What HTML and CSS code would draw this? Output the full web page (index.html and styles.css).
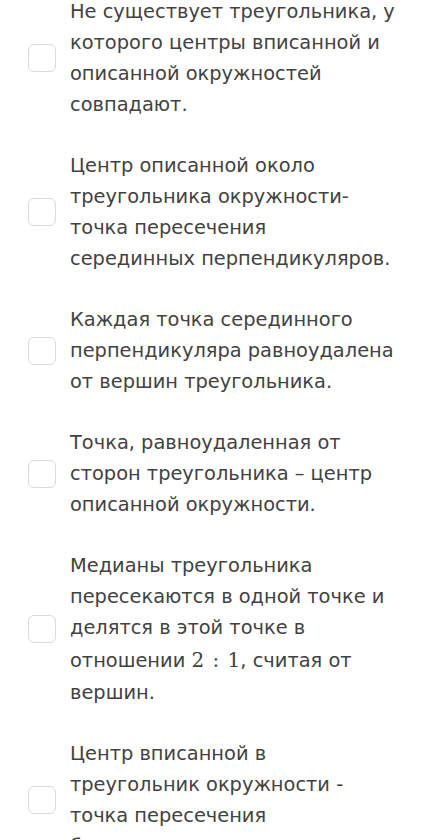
FILE: index.html
```html
<!DOCTYPE html>
<html lang="ru">
<head>
    <meta charset="UTF-8">
    <meta name="viewport" content="width=device-width, initial-scale=1.0">
    <title>Утверждения о треугольнике</title>
    <link rel="stylesheet" href="styles.css">
</head>
<body>
    <div class="lista">
        <label class="opcao">
            <span class="caixa"></span>
            <span class="texto">Не существует треугольника, у которого центры вписанной и описанной окружностей совпадают.</span>
        </label>
        <label class="opcao">
            <span class="caixa"></span>
            <span class="texto">Центр описанной около треугольника окружности- точка пересечения серединных перпендикуляров.</span>
        </label>
        <label class="opcao">
            <span class="caixa"></span>
            <span class="texto">Каждая точка серединного перпендикуляра равноудалена от вершин треугольника.</span>
        </label>
        <label class="opcao">
            <span class="caixa"></span>
            <span class="texto">Точка, равноудаленная от сторон треугольника – центр описанной окружности.</span>
        </label>
        <label class="opcao">
            <span class="caixa"></span>
            <span class="texto">Медианы треугольника пересекаются в одной точке и делятся в этой точке в отношении <span class="formula">2 : 1</span>, считая от вершин.</span>
        </label>
        <label class="opcao">
            <span class="caixa"></span>
            <span class="texto">Центр вписанной в треугольник окружности - точка пересечения <span class="sem-quebra">биссектрис треугольника.</span></span>
        </label>
    </div>
</body>
</html>
```

FILE: styles.css
```css
body {
    margin: 0;
    background-color: #ffffff;
    color: #424242;
    font-family: "DejaVu Sans", sans-serif;
}

.lista {
    display: flex;
    flex-direction: column;
    gap: 30px;
    margin-top: -4px;
    padding: 0 35px 0 28px;
}

.opcao {
    display: flex;
    align-items: center;
    gap: 14px;
}

.caixa {
    flex: none;
    width: 26px;
    height: 26px;
    border: 1.5px solid #dadada;
    border-radius: 6px;
}

.texto {
    font-size: 19.4px;
    line-height: 31px;
}

.formula {
    display: inline-block;
    line-height: 34px;
    font-family: "DejaVu Serif", serif;
    font-size: 20px;
    white-space: nowrap;
    word-spacing: 2px;
}

.sem-quebra {
    white-space: nowrap;
}
```
